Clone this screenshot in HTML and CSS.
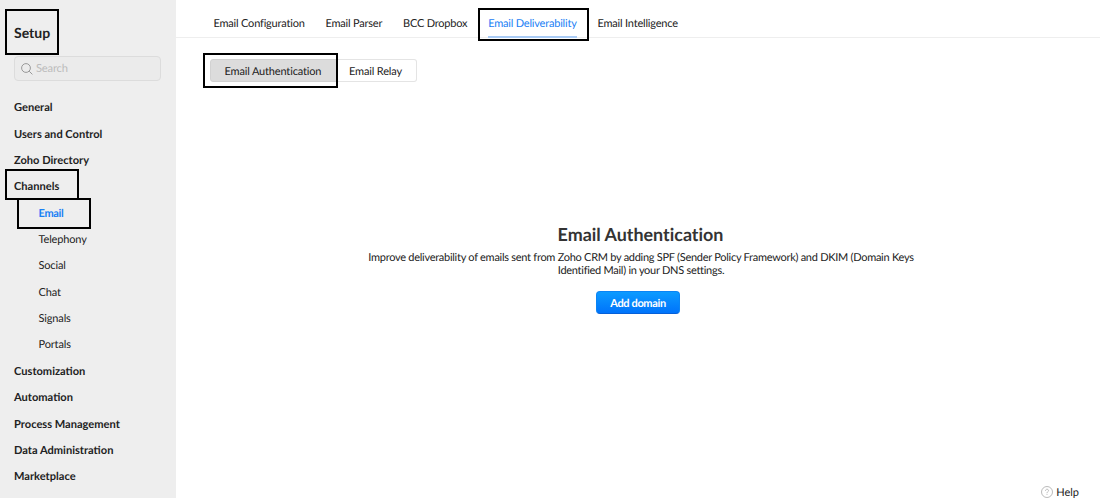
FILE: index.html
```html
<!DOCTYPE html>
<html lang="en">

<head>
    <meta charset="UTF-8">
    <meta name="viewport" content="width=device-width, initial-scale=1.0">
    <title>Setup</title>
    <link rel="stylesheet" href="styles.css">
</head>

<body>
    <div class="wrap">

        <div class="sidebar">
            <h1 class="title"><span>Setup</span><i class="mark markSetup"></i></h1>

            <div class="search">
                <svg width="12" height="12" viewBox="0 0 12 12" fill="none" stroke="#8f8f8f" stroke-width="0.9">
                    <circle cx="5" cy="5" r="4.4" />
                    <path d="M8.2 8.2L11.4 11.4" />
                </svg>
                <span>Search</span>
            </div>

            <ul class="menu">
                <li><span>General</span></li>
                <li><span>Users and Control</span></li>
                <li><span>Zoho Directory</span></li>
                <li><span>Channels</span><i class="mark markChannels"></i></li>
                <li class="sub active"><span>Email</span><i class="mark markEmail"></i></li>
                <li class="sub"><span>Telephony</span></li>
                <li class="sub"><span>Social</span></li>
                <li class="sub"><span>Chat</span></li>
                <li class="sub"><span>Signals</span></li>
                <li class="sub"><span>Portals</span></li>
                <li><span>Customization</span></li>
                <li><span>Automation</span></li>
                <li><span>Process Management</span></li>
                <li><span>Data Administration</span></li>
                <li><span>Marketplace</span></li>
            </ul>
        </div>

        <div class="main">
            <div class="tabs">
                <div class="tab"><span>Email Configuration</span></div>
                <div class="tab"><span>Email Parser</span></div>
                <div class="tab"><span>BCC Dropbox</span></div>
                <div class="tab current"><span>Email Deliverability</span><i class="mark markTab"></i></div>
                <div class="tab"><span>Email Intelligence</span></div>
            </div>

            <div class="switch">
                <div class="switchItem selected"><span>Email Authentication</span><i class="mark markSwitch"></i></div>
                <div class="switchItem"><span>Email Relay</span></div>
            </div>

            <div class="empty">
                <h2>Email Authentication</h2>
                <p>Improve deliverability of emails sent from Zoho CRM by adding SPF (Sender Policy Framework) and DKIM (Domain Keys<br>Identified Mail) in your DNS settings.</p>
                <button class="addBtn">Add domain</button>
            </div>

            <div class="help">
                <svg width="12" height="12" viewBox="0 0 12 12" fill="none" stroke="#aaa" stroke-width="0.8">
                    <circle cx="6" cy="6" r="5.5" />
                    <path d="M4.5 4.8C4.5 2.7 7.6 2.8 7.5 4.7C7.4 5.8 6 5.8 6 7.2M6 8.2V9" />
                </svg>
                <span>Help</span>
            </div>
        </div>

    </div>
</body>

</html>
```

FILE: styles.css
```css
* {
    margin: 0;
    padding: 0;
    box-sizing: border-box;
}

html,
body {
    width: 100%;
    height: 100%;
    overflow: hidden;
}

body {
    font-family: Lato, "Liberation Sans", sans-serif;
    font-size: 11px;
    color: #222;
    background-color: #fff;
    text-rendering: geometricPrecision;
}

.wrap {
    display: flex;
    width: 100%;
    height: 100%;
}

/* sidebar */
.sidebar {
    flex-shrink: 0;
    width: 176px;
    padding: 22px 15px 0 14px;
    background-color: #eee;
}

.title {
    position: relative;
    height: 34px;
    line-height: 22px;
    font-size: 14px;
    font-weight: 700;
}

.search {
    display: flex;
    align-items: center;
    gap: 3px;
    height: 25px;
    padding-left: 6px;
    border: 1px solid #dcdcdc;
    border-radius: 4px;
    background-color: #ebebeb;
    color: #bcbcbc;
    font-size: 11.2px;
    letter-spacing: -0.2px;
}

.menu {
    padding-top: 13.2px;
    list-style: none;
}

.menu li {
    position: relative;
    height: 26.37px;
    line-height: 27px;
    font-size: 11.1px;
    font-weight: 700;
}

.menu .sub {
    padding-left: 24.5px;
    font-size: 11px;
    font-weight: 400;
    letter-spacing: -0.15px;
}

.menu .active {
    color: #1a80f5;
    font-weight: 700;
    letter-spacing: -0.3px;
}

/* black frames over the highlighted items */
.mark {
    position: absolute;
    border: 2px solid #000;
    pointer-events: none;
}

.markSetup {
    left: -9px;
    top: -13px;
    width: 54px;
    height: 46px;
}

.markChannels {
    left: -9px;
    top: -4px;
    width: 74px;
    height: 31px;
}

.markEmail {
    left: 2.5px;
    top: -2px;
    width: 74px;
    height: 31px;
}

.markTab {
    left: -10px;
    top: 8px;
    width: 111px;
    height: 33px;
}

.markSwitch {
    left: -8px;
    top: -7px;
    width: 135px;
    height: 35px;
}

/* content */
.main {
    flex: 1;
    display: flex;
    flex-direction: column;
    font-variant-ligatures: no-common-ligatures;
}

.tabs {
    display: flex;
    gap: 20.8px;
    height: 38px;
    padding-left: 37.5px;
    border-bottom: 1px solid #eee;
    letter-spacing: -0.2px;
}

.tab {
    position: relative;
    height: 38px;
    line-height: 47px;
    white-space: nowrap;
}

.current {
    border-bottom: 2px solid #a9cbf5;
    color: #1a80f5;
}

.switch {
    display: flex;
    height: 23px;
    margin: 21px 0 0 34px;
    letter-spacing: -0.16px;
}

.switchItem {
    position: relative;
    padding: 0 14px 0 11px;
    border: 1px solid #e4e4e4;
    border-left: 0;
    border-radius: 0 3px 3px 0;
    line-height: 23px;
}

.selected {
    width: 128px;
    padding: 0 0 0 13.5px;
    border: 1px solid #d2d2d2;
    border-radius: 3px 0 0 3px;
    background-color: #dcdcdc;
}

.empty {
    flex: 1;
    padding-top: 140px;
    text-align: center;
}

.empty h2 {
    padding-left: 5px;
    line-height: 24px;
    font-size: 17.9px;
    color: #333;
}

.empty p {
    padding-left: 6px;
    margin-top: 5px;
    line-height: 13.2px;
    letter-spacing: -0.275px;
}

.addBtn {
    width: 84px;
    height: 23px;
    margin-top: 13.6px;
    padding-top: 1px;
    border: 1px solid #0a84f5;
    border-bottom-color: #0560d8;
    border-radius: 4px;
    background: linear-gradient(#0c9bff, #0073fb);
    color: #fff;
    font-family: inherit;
    font-size: 11px;
    font-weight: 700;
    letter-spacing: -0.35px;
    text-rendering: inherit;
}

.help {
    display: flex;
    align-items: center;
    align-self: flex-end;
    gap: 3px;
    height: 12px;
    margin-right: 21px;
}
```
